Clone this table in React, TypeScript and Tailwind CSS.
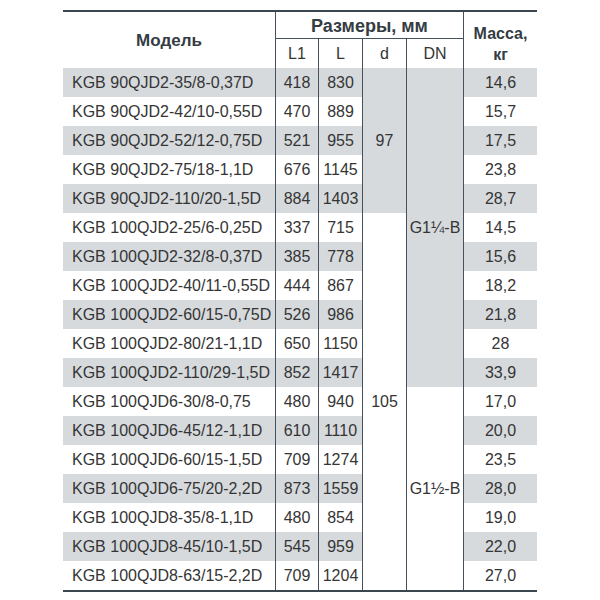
import React from 'react';

type Row = { model: string; l1: string; l: string; mass: string };

const rows: Row[] = [
  { model: 'KGB 90QJD2-35/8-0,37D', l1: '418', l: '830', mass: '14,6' },
  { model: 'KGB 90QJD2-42/10-0,55D', l1: '470', l: '889', mass: '15,7' },
  { model: 'KGB 90QJD2-52/12-0,75D', l1: '521', l: '955', mass: '17,5' },
  { model: 'KGB 90QJD2-75/18-1,1D', l1: '676', l: '1145', mass: '23,8' },
  { model: 'KGB 90QJD2-110/20-1,5D', l1: '884', l: '1403', mass: '28,7' },
  { model: 'KGB 100QJD2-25/6-0,25D', l1: '337', l: '715', mass: '14,5' },
  { model: 'KGB 100QJD2-32/8-0,37D', l1: '385', l: '778', mass: '15,6' },
  { model: 'KGB 100QJD2-40/11-0,55D', l1: '444', l: '867', mass: '18,2' },
  { model: 'KGB 100QJD2-60/15-0,75D', l1: '526', l: '986', mass: '21,8' },
  { model: 'KGB 100QJD2-80/21-1,1D', l1: '650', l: '1150', mass: '28' },
  { model: 'KGB 100QJD2-110/29-1,5D', l1: '852', l: '1417', mass: '33,9' },
  { model: 'KGB 100QJD6-30/8-0,75', l1: '480', l: '940', mass: '17,0' },
  { model: 'KGB 100QJD6-45/12-1,1D', l1: '610', l: '1110', mass: '20,0' },
  { model: 'KGB 100QJD6-60/15-1,5D', l1: '709', l: '1274', mass: '23,5' },
  { model: 'KGB 100QJD6-75/20-2,2D', l1: '873', l: '1559', mass: '28,0' },
  { model: 'KGB 100QJD8-35/8-1,1D', l1: '480', l: '854', mass: '19,0' },
  { model: 'KGB 100QJD8-45/10-1,5D', l1: '545', l: '959', mass: '22,0' },
  { model: 'KGB 100QJD8-63/15-2,2D', l1: '709', l: '1204', mass: '27,0' },
];

const cell = 'flex items-center justify-center';
const line = 'border-l border-[#47515b]';

export default function App() {
  return (
    <div className="w-[600px] h-[600px] bg-white pt-[10px] pl-[63px] font-['Liberation_Sans',Arial,sans-serif] text-[16px] text-[#353535]">
      <div className="w-[474px] border-t-2 border-b-2 border-[#3b4650] grid grid-cols-[212px_43px_44px_44px_57px_74px] grid-rows-[27px_29px_repeat(18,29px)]">
        {/* header */}
        <div className={`${cell} row-span-2 font-bold text-[17px] text-[#343c44] pt-[2px]`}>Модель</div>
        <div className={`${cell} col-span-4 ${line} border-b font-bold text-[18px] text-[#343c44] pt-[2px]`}>Размеры, мм</div>
        <div className={`row-span-2 ${line} flex flex-col items-center pt-[11px] font-bold text-[16px] leading-[21px] text-[#343c44]`}>
          <span>Масса,</span>
          <span>кг</span>
        </div>
        <div className={`${cell} ${line}`}>L1</div>
        <div className={`${cell} ${line}`}>L</div>
        <div className={`${cell} ${line}`}>d</div>
        <div className={`${cell} ${line}`}>DN</div>

        {/* body */}
        {rows.map((r, i) => {
          const bg = i % 2 === 0 ? 'bg-[#d6dadd]' : 'bg-white';
          return (
            <React.Fragment key={r.model}>
              <div className={`flex items-center pl-[9px] ${bg}`}>{r.model}</div>
              <div className={`${cell} ${line} ${bg}`}>{r.l1}</div>
              <div className={`${cell} ${line} ${bg}`}>{r.l}</div>
              {i === 0 && <div className={`${cell} ${line} row-span-5 bg-[#d6dadd]`}>97</div>}
              {i === 5 && <div className={`${cell} ${line} row-span-13 bg-white`}>105</div>}
              {i === 0 && <div className={`${cell} ${line} row-span-11 bg-[#d6dadd]`}>G1¼-B</div>}
              {i === 11 && <div className={`${cell} ${line} row-span-7 bg-white`}>G1½-B</div>}
              <div className={`${cell} ${line} ${bg}`}>{r.mass}</div>
            </React.Fragment>
          );
        })}
      </div>
    </div>
  );
}
